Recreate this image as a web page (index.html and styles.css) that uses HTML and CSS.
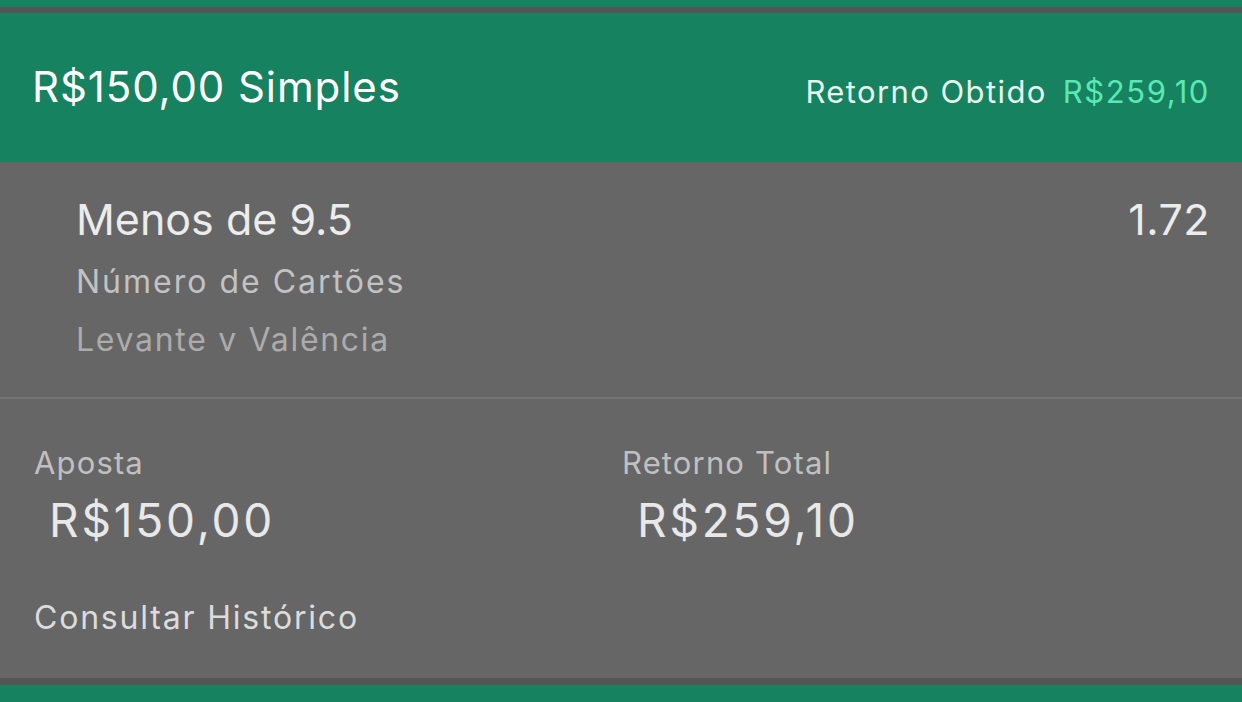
FILE: index.html
```html
<!DOCTYPE html>
<html lang="pt-BR">
<head>
<meta charset="utf-8">
<link rel="stylesheet" href="styles.css">
</head>
<body>
<div class="top-strip"></div>
<div class="bet">
  <header class="bet-header">
    <div class="bet-title">R$150,00 Simples</div>
    <div class="bet-return"><span class="ret-label">Retorno Obtido</span><span class="ret-value">R$259,10</span></div>
  </header>
  <section class="selection">
    <div class="sel-info">
      <div class="sel-name">Menos de 9.5</div>
      <div class="sel-market">Número de Cartões</div>
      <div class="sel-event">Levante v Valência</div>
    </div>
    <div class="sel-odds">1.72</div>
  </section>
  <section class="summary">
    <div class="amounts">
      <div class="amount">
        <div class="amount-label">Aposta</div>
        <div class="amount-value">R$150,00</div>
      </div>
      <div class="amount">
        <div class="amount-label">Retorno Total</div>
        <div class="amount-value">R$259,10</div>
      </div>
    </div>
    <div class="history">Consultar Histórico</div>
  </section>
</div>
<div class="next-bet"></div>
</body>
</html>
```
FILE: styles.css
```css
* { box-sizing: border-box; margin: 0; padding: 0; }
html, body { width: 1242px; height: 702px; overflow: hidden; }
body {
  background: #666666;
  font-family: Inter, "Noto Sans", "Liberation Sans", sans-serif;
  -webkit-font-smoothing: antialiased;
}
.top-strip {
  height: 13px;
  background: #16825f;
  border-bottom: 6px solid #555555;
}
.bet { background: #666666; }
.bet-header {
  height: 149px;
  background: #16825f;
  display: flex;
  align-items: center;
  justify-content: space-between;
  padding: 0 32px 0 32px;
}
.bet-title {
  color: #ffffff;
  font-size: 42px;
  letter-spacing: 0.9px;
  padding-bottom: 2px;
}
.bet-return {
  display: flex;
  gap: 16px;
  font-size: 31px;
  letter-spacing: 1.4px;
  padding-top: 8px;
}
.ret-label { color: #e8f2ee; }
.ret-value { color: #5ae8b4; letter-spacing: 1.6px; }
.selection {
  height: 237px;
  border-bottom: 2px solid #747474;
  display: flex;
  justify-content: space-between;
  padding: 28px 32px 0 76px;
}
.sel-name { color: #ececec; font-size: 43px; line-height: 58px; }
.sel-market { color: #c2c2c2; font-size: 32px; line-height: 56px; margin-top: 6px; letter-spacing: 2px; }
.sel-event { color: #acacac; font-size: 32px; line-height: 56px; margin-top: 2px; letter-spacing: 1.7px; }
.sel-odds { color: #ececec; font-size: 43px; line-height: 58px; letter-spacing: 0.5px; }
.summary {
  height: 286px;
  border-bottom: 7px solid #555555;
  padding: 40px 34px 0 34px;
}
.amounts {
  display: grid;
  grid-template-columns: 588px 1fr;
}
.amount-label { color: #c0c0c0; font-size: 31px; line-height: 48px; letter-spacing: 1.15px; }
.amount-value { color: #e8e8e8; font-size: 46px; line-height: 60px; padding-left: 15px; margin-top: 3px; letter-spacing: 2.8px; }
.history { color: #dcdcdc; font-size: 32px; line-height: 48px; margin-top: 44px; letter-spacing: 1.8px; }
.next-bet { height: 17px; background: #16825f; }
```
